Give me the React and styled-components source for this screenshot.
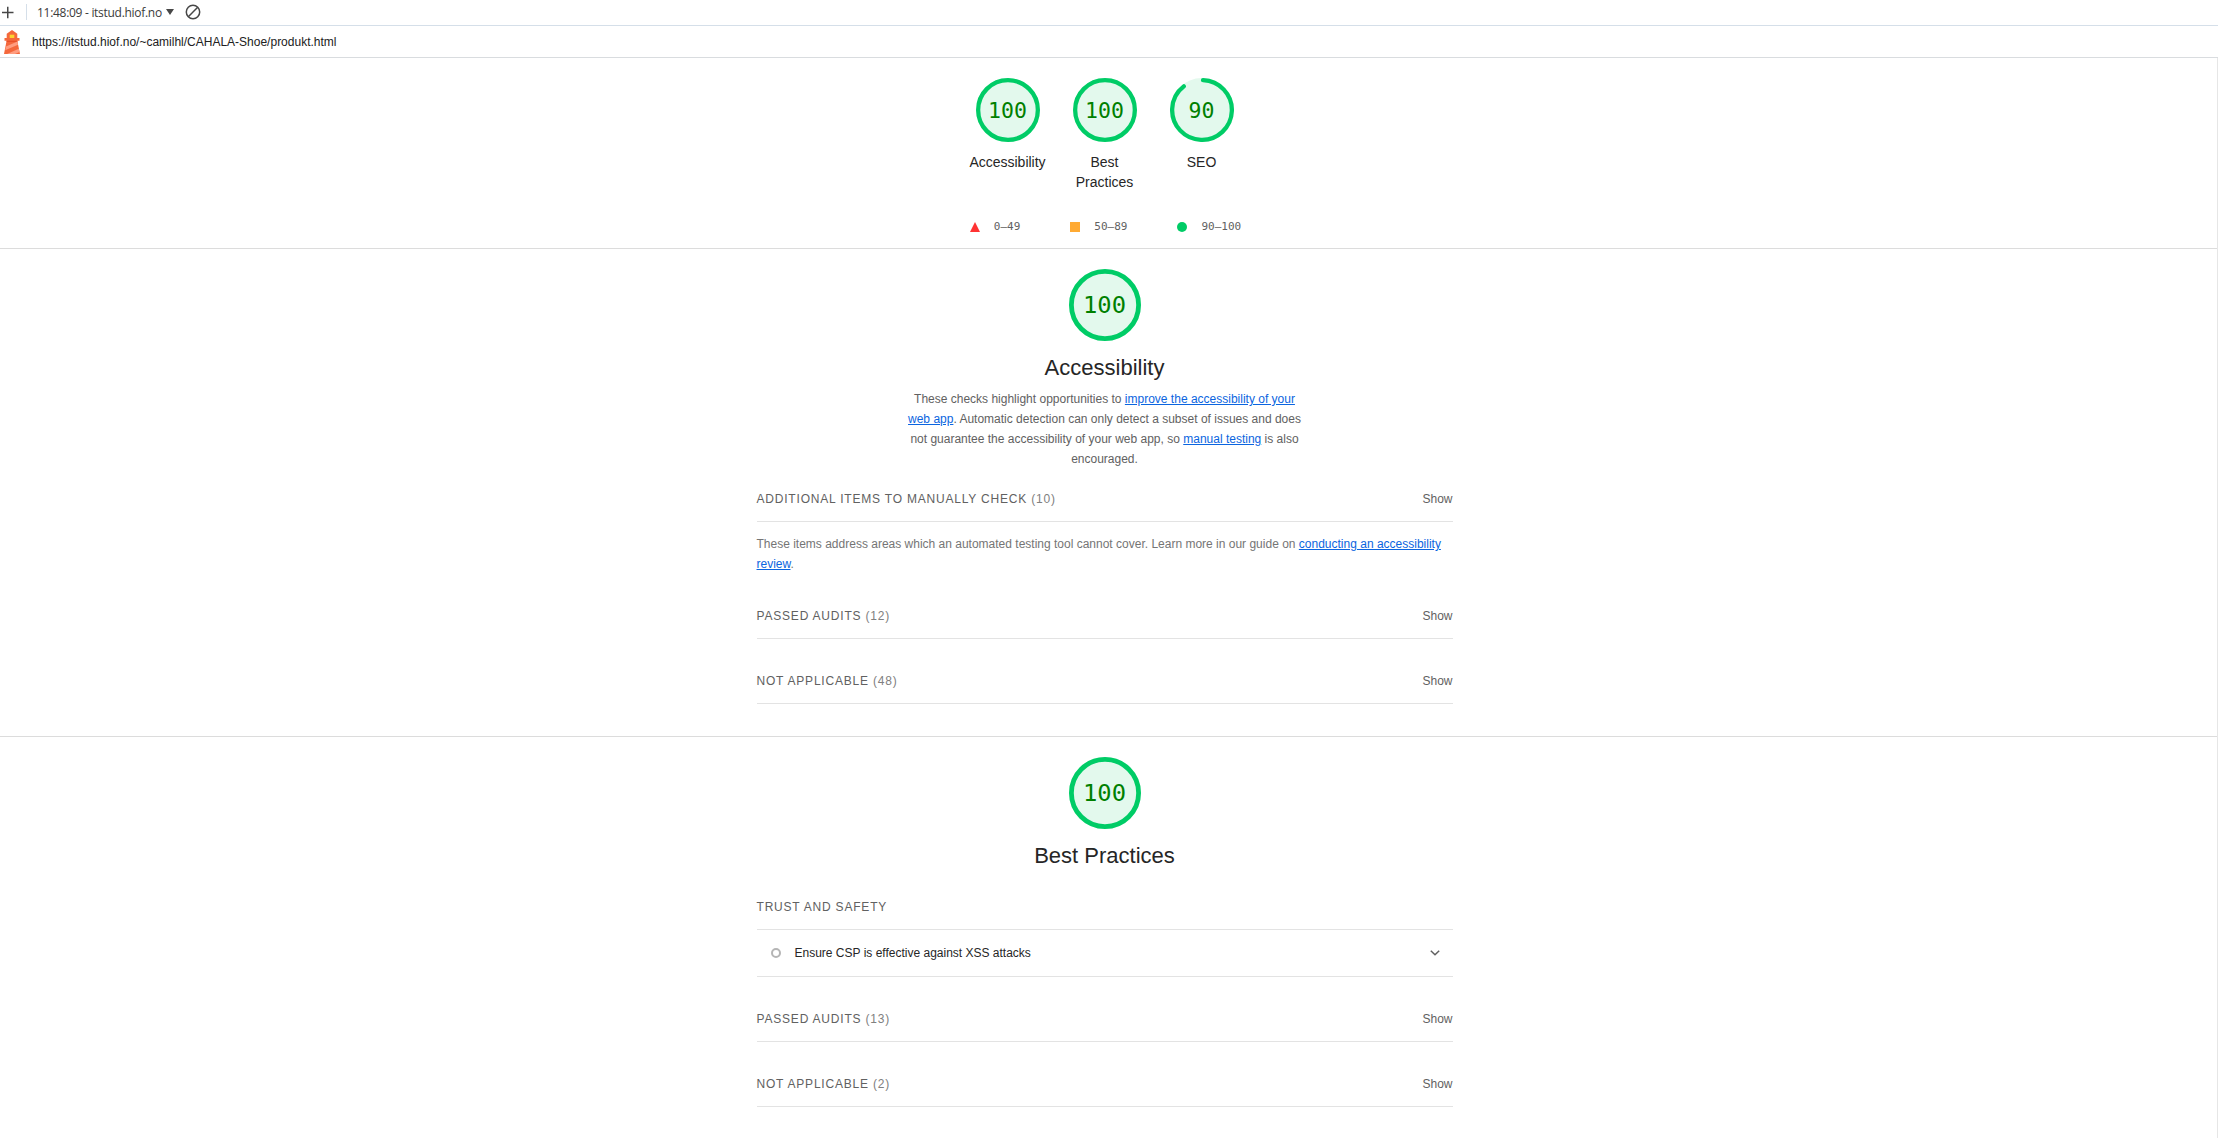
import React from "react";
import styled, { createGlobalStyle } from "styled-components";

const GlobalStyle = createGlobalStyle`
  * { box-sizing: border-box; }
  body {
    margin: 0;
    background: #fff;
    color: #262626;
    font-family: "Liberation Sans", Arial, sans-serif;
    font-size: 12px;
    line-height: 20px;
    overflow: hidden;
  }
`;

const Page = styled.div`
  display: flex;
  flex-direction: column;
  height: 1138px;
  overflow: hidden;
`;

const Toolbar = styled.header`
  display: flex;
  align-items: center;
  height: 26px;
  padding: 0 0 1px 1px;
  border-bottom: 1px solid #d5dfe9;
  flex: none;
`;

const ToolbarDivider = styled.i`
  width: 1px;
  height: 16px;
  margin: 0 10px 0 12px;
  background: #d5dfe9;
`;

const SessionLabel = styled.span`
  padding-top: 1px;
  font-family: "Open Sans", "Noto Sans", sans-serif;
  font-size: 12px;
  line-height: 16px;
  letter-spacing: -0.29px;
  color: #3a3a3a;
  white-space: nowrap;
`;

const Caret = styled.i`
  margin: 0 11px 1px 4px;
  border: 4px solid transparent;
  border-top: 6px solid #474747;
  border-bottom: 0;
`;

const UrlBar = styled.div`
  display: flex;
  align-items: center;
  gap: 12px;
  height: 32px;
  padding-left: 4px;
  border-bottom: 1px solid #d9dcdf;
  flex: none;
`;

const Url = styled.span`
  color: #212121;
`;

const Report = styled.main`
  flex: 1;
  border-right: 1px solid #e6e6e6;
`;

const Band = styled.section`
  display: flex;
  flex-direction: column;
  align-items: center;
  height: ${(p) => p.$height}px;
  padding-top: 20px;
  padding-right: 8px;
  border-bottom: ${(p) => (p.$last ? "0" : "1px solid #dcdcdc")};
`;

const Scores = styled.div`
  display: flex;
  height: 136px;
`;

const Score = styled.div`
  display: flex;
  flex-direction: column;
  align-items: center;
  gap: 10px;
  width: 97px;
`;

const ScoreLabel = styled.span`
  width: 80px;
  font-size: 14px;
  line-height: 20px;
  text-align: center;
`;

const GaugeBox = styled.div`
  display: grid;
  place-items: center;
  width: ${(p) => p.$size}px;
  height: ${(p) => p.$size}px;
  flex: none;

  > * { grid-area: 1 / 1; }
`;

const GaugeValue = styled.span`
  padding-top: 2px;
  font-family: "DejaVu Sans Mono", monospace;
  font-size: ${(p) => p.$size}px;
  line-height: 1;
  color: #008000;
`;

const Legend = styled.div`
  display: flex;
  align-items: center;
  gap: 50px;
  height: 20px;
  margin-top: 3px;
  padding-left: 2px;
`;

const LegendItem = styled.span`
  display: flex;
  align-items: center;
  gap: 14px;
  font-family: "DejaVu Sans Mono", monospace;
  font-size: 11px;
  color: #616161;
`;

const Triangle = styled.i`
  border: 5px solid transparent;
  border-top: 0;
  border-bottom: 10px solid #f33;
`;

const Square = styled.i`
  width: 10px;
  height: 10px;
  background: #fa3;
`;

const Dot = styled.i`
  width: 10px;
  height: 10px;
  border-radius: 50%;
  background: #0c6;
`;

const Title = styled.h2`
  margin: 13px 0 7px;
  font-size: 22px;
  font-weight: 400;
  line-height: 28px;
`;

const Description = styled.p`
  width: 400px;
  margin: 0;
  text-align: center;
  color: #616161;
`;

const Link = styled.a`
  color: #0b65e0;
  text-decoration: underline;
`;

const Clump = styled.div`
  display: flex;
  justify-content: space-between;
  align-items: flex-end;
  width: 696px;
  height: ${(p) => p.$height || 65}px;
  padding-bottom: 12px;
  border-bottom: 1px solid #e3e3e3;
  flex: none;
`;

const ClumpTitle = styled.span`
  letter-spacing: 0.8px;
  text-transform: uppercase;
  color: #616161;
`;

const Count = styled.span`
  color: #808080;
`;

const Show = styled.span`
  color: #616161;
`;

const ClumpNote = styled.p`
  width: 696px;
  margin: 12px 0 0;
  color: #757575;
`;

const Audit = styled.div`
  display: flex;
  align-items: center;
  width: 696px;
  height: 47px;
  padding: 0 13px 0 14px;
  border-bottom: 1px solid #e3e3e3;
  flex: none;
`;

const AuditMark = styled.i`
  width: 10px;
  height: 10px;
  margin-right: 14px;
  border: 2px solid #b5b5b5;
  border-radius: 50%;
`;

const AuditText = styled.span`
  flex: 1;
`;

function Gauge({ value, size, stroke, textSize }) {
  const r = (size - stroke) / 2;
  const length = 2 * Math.PI * r;
  const full = value === 100;
  return (
    <GaugeBox $size={size}>
      <svg width={size} height={size} viewBox={`0 0 ${size} ${size}`}>
        <circle cx={size / 2} cy={size / 2} r={size / 2} fill="#e3f9ed" />
        <circle
          cx={size / 2}
          cy={size / 2}
          r={r}
          fill="none"
          stroke="#0c6"
          strokeWidth={stroke}
          strokeLinecap="round"
          strokeDasharray={full ? undefined : `${(value / 100) * length - stroke / 2} ${length}`}
          transform={`rotate(${full ? -90 : -88} ${size / 2} ${size / 2})`}
        />
      </svg>
      <GaugeValue $size={textSize}>{value}</GaugeValue>
    </GaugeBox>
  );
}

function Group({ title, count, height }) {
  return (
    <Clump $height={height}>
      <ClumpTitle>
        {title} {count != null && <Count>({count})</Count>}
      </ClumpTitle>
      {count != null && <Show>Show</Show>}
    </Clump>
  );
}

function Lighthouse() {
  return (
    <svg width="16" height="24" viewBox="0 0 16 24">
      <path d="M8 0 13.300 3.700V8h2.200v2.700h-2.200L16 24H0l2.600-13.300H.5V8h2.200V3.700z" fill="#f4683c" />
      <path d="M5.700 4.700h4.600V8H5.700z" fill="#fdd32f" />
      <path d="M2.700 10.700h10.600l.2 1.300h-11z" fill="#e8502a" />
      <path d="M2 16.500 13.400 11.500l.6 3.200L1.200 20.200zM3 24l11.800-5.200.7 3.200-4.500 2z" fill="#ff9d80" />
    </svg>
  );
}

const scores = [
  { label: "Accessibility", value: 100 },
  { label: "Best Practices", value: 100 },
  { label: "SEO", value: 90 },
];

export default function App() {
  return (
    <Page>
      <GlobalStyle />
      <Toolbar>
        <svg width="13" height="13" viewBox="0 0 13 13" stroke="#474747" strokeWidth="1.500">
          <path d="M6.750 .7v11.600M1 6.500h11.500" />
        </svg>
        <ToolbarDivider />
        <SessionLabel>11:48:09 - itstud.hiof.no</SessionLabel>
        <Caret />
        <svg width="16" height="16" viewBox="0 0 16 16" fill="none" stroke="#474747" strokeWidth="1.500">
          <circle cx="8" cy="8" r="6.700" />
          <path d="M3.300 12.700 12.700 3.300" />
        </svg>
      </Toolbar>
      <UrlBar>
        <Lighthouse />
        <Url>https://itstud.hiof.no/~camilhl/CAHALA-Shoe/produkt.html</Url>
      </UrlBar>
      <Report>
        <Band $height={191}>
          <Scores>
            {scores.map((s) => (
              <Score key={s.label}>
                <Gauge value={s.value} size={64} stroke={4.300} textSize={21.500} />
                <ScoreLabel>{s.label}</ScoreLabel>
              </Score>
            ))}
          </Scores>
          <Legend>
            <LegendItem><Triangle />0–49</LegendItem>
            <LegendItem><Square />50–89</LegendItem>
            <LegendItem><Dot />90–100</LegendItem>
          </Legend>
        </Band>

        <Band $height={488}>
          <Gauge value={100} size={72} stroke={4.800} textSize={23.800} />
          <Title>Accessibility</Title>
          <Description>
            These checks highlight opportunities to <Link>improve the accessibility of your web app</Link>.
            Automatic detection can only detect a subset of issues and does not guarantee the
            accessibility of your web app, so <Link>manual testing</Link> is also encouraged.
          </Description>
          <Group title="Additional items to manually check" count={10} height={53} />
          <ClumpNote>
            These items address areas which an automated testing tool cannot cover. Learn more in our
            guide on <Link>conducting an accessibility review</Link>.
          </ClumpNote>
          <Group title="Passed audits" count={12} height={65} />
          <Group title="Not applicable" count={48} />
        </Band>

        <Band $height={401} $last>
          <Gauge value={100} size={72} stroke={4.800} textSize={23.800} />
          <Title>Best Practices</Title>
          <Group title="Trust and Safety" height={53} />
          <Audit>
            <AuditMark />
            <AuditText>Ensure CSP is effective against XSS attacks</AuditText>
            <svg width="10" height="6" viewBox="0 0 10 6" fill="none" stroke="#616161" strokeWidth="1.500">
              <path d="M.8 .8 5 4.800 9.200 .8" />
            </svg>
          </Audit>
          <Group title="Passed audits" count={13} />
          <Group title="Not applicable" count={2} />
        </Band>
      </Report>
    </Page>
  );
}
